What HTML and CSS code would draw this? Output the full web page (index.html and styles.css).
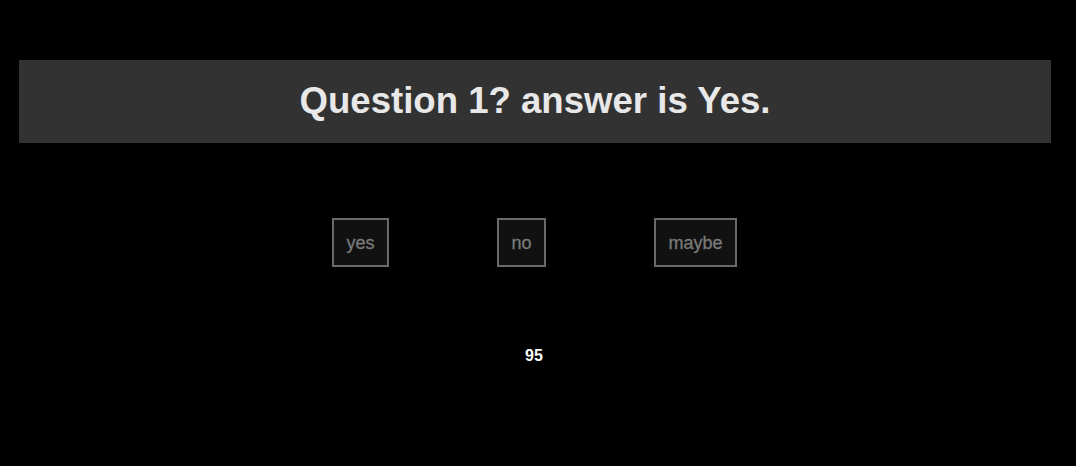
FILE: index.html
```html
<!DOCTYPE html>
<html>
<head>
<meta charset="utf-8">
<link rel="stylesheet" href="styles.css">
</head>
<body>
<div class="page">
  <div class="header">
    <h1 class="title">Question 1? answer is Yes.</h1>
  </div>
  <div class="answers">
    <button class="answer">yes</button>
    <button class="answer">no</button>
    <button class="answer">maybe</button>
  </div>
  <div class="score">95</div>
</div>
</body>
</html>
```
FILE: styles.css
```css
html, body {
  margin: 0;
  padding: 0;
  background: #000;
  font-family: "Liberation Sans", Arial, sans-serif;
}
.page {
  padding: 60px 25px 0 19px;
}
.header {
  background: #323232;
  height: 83px;
  display: flex;
  align-items: center;
  justify-content: center;
}
.title {
  margin: 0 0 2px 0;
  color: #e8e8e8;
  font-size: 36.6px;
  font-weight: bold;
}
.answers {
  display: flex;
  justify-content: center;
  gap: 108px;
  margin-top: 75px;
  padding-right: 1px;
}
.answer {
  background: #111;
  border: 2px solid #6a6a6a;
  color: #7a7a7a;
  font-family: "Liberation Sans", Arial, sans-serif;
  font-size: 18px;
  line-height: 22px;
  padding: 12px 12.5px 11px;
  margin: 0;
  -webkit-text-stroke: 0.3px #7a7a7a;
}
.score {
  text-align: center;
  color: #fff;
  font-weight: bold;
  font-size: 16px;
  margin-top: 80px;
  padding-right: 2px;
}
```
